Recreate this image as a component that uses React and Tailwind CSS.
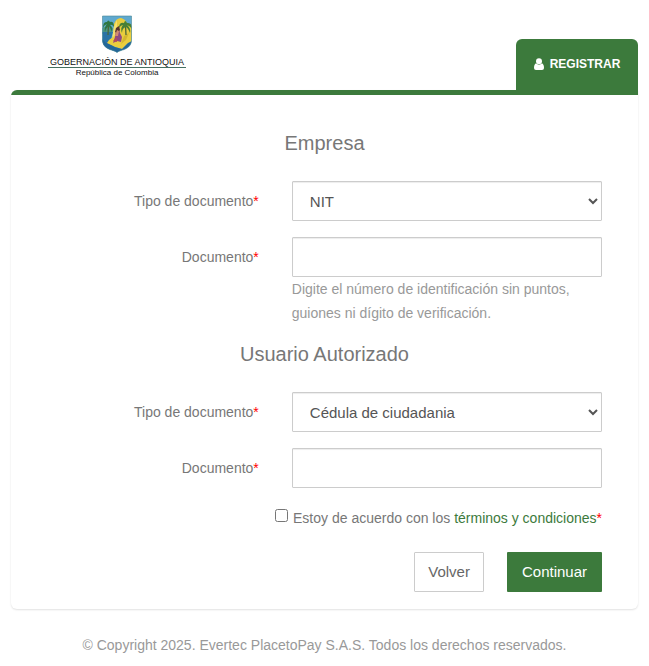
import React from "react";

function Crest() {
  return (
    <svg viewBox="0 0 30 38" className="h-[38px] w-[30px]" aria-hidden="true">
      <defs>
        <clipPath id="shield">
          <path d="M.5 1H29.500V25C29.500 31 25 34 19 35.500Q16 36.500 15 37.500Q14 36.500 11 35.500C5 34 .5 31 .5 25Z" />
        </clipPath>
      </defs>
      <g clipPath="url(#shield)">
        <rect width="30" height="38" fill="#5fa9cf" />
        <path d="M0 13L6 11L11 13L10 19L0 19Z" fill="#4b9486" />
        <path d="M0 17H11L9 24L14 38H0Z" fill="#2a73a6" />
        <path d="M12 9Q14 3 19 3Q23 4 25 8L30 11V26L25 29L20 34L13 32L5 28L7 25L11 22Z" fill="#e9cd3e" />
        <path d="M4 28L13 32L20 34L26 28L30 26V38H0V24Z" fill="#236698" />
        <path d="M15 5L12 12L10 23L13 20L15 12Z" fill="#f3df70" />
        <path d="M22 21L27 18L24 25L19 29Z" fill="#d4b62f" />
        <path d="M6.500 9L6 20M23.500 10L24 20" stroke="#4d6737" strokeWidth="1.300" fill="none" />
        <path d="M1 13Q1 6 5 7Q6 4 8 7Q12 6 12 12Q10 9 8 10Q11 12 10 17Q8 12 6.500 11Q4 13 3 17Q2 12 5 9Q2 10 1 13Z" fill="#2f7743" />
        <path d="M17 13Q17 7 22 8Q23 4 25 8Q30 7 30 14Q28 11 25 10Q29 13 28 18Q26 13 24 12Q20 13 20 18Q18 13 21 10Q19 10 17 13Z" fill="#477f36" />
        <path d="M14 15L17 13L18 18L20 22L19 27L15 26L11 28L13 22Z" fill="#8f4a82" />
        <path d="M14 13L17 11L18 15L15 18L13 17Z" fill="#55332e" />
        <path d="M15 15L17 16L16 21L13 21Z" fill="#d18b70" />
        <path d="M11 26L15 22L15 27Z" fill="#b74a58" />
      </g>
      <path d="M.5 1H29.500V25C29.500 31 25 34 19 35.500Q16 36.500 15 37.500Q14 36.500 11 35.500C5 34 .5 31 .5 25Z" fill="none" stroke="#4a8794" strokeWidth=".6" />
    </svg>
  );
}

function Logo() {
  return (
    <div className="flex flex-col items-center whitespace-nowrap text-[#111]">
      <Crest />
      <div className="mt-1 border-b border-[#456f61] px-0.5 text-[9px] leading-[10px]">
        GOBERNACIÓN DE ANTIOQUIA
      </div>
      <div className="text-[8px] leading-[10px]">República de Colombia</div>
    </div>
  );
}

const Required = () => <span className="text-[#f00]">*</span>;

const controlClass =
  "block h-10 w-full rounded-[1px] border border-[#ccc] bg-white px-[13px] text-[15px] text-[#555] shadow-[inset_0_1px_1px_rgba(0,0,0,0.075)]";

function Field({ id, label, children }) {
  return (
    <div className="grid grid-cols-[2fr_3fr] gap-[33px]">
      <label htmlFor={id} className="h-10 text-right leading-10">
        {label}
        <Required />
      </label>
      <div className="min-w-0">{children}</div>
    </div>
  );
}

function FormSection({ title, prefix, options, help }) {
  return (
    <section>
      <h2 className="mb-[26px] text-center text-[20px] leading-6">{title}</h2>
      <div className="flex flex-col gap-4 pr-9 pl-[41px]">
        <Field id={`${prefix}-type`} label="Tipo de documento">
          <select id={`${prefix}-type`} className={controlClass}>
            {options.map((option) => (
              <option key={option}>{option}</option>
            ))}
          </select>
        </Field>
        <Field id={`${prefix}-document`} label="Documento">
          <input id={`${prefix}-document`} type="text" className={controlClass} />
          {help && <p className="leading-6 text-[#999]">{help}</p>}
        </Field>
      </div>
    </section>
  );
}

export default function App() {
  return (
    <div className="px-[11px] pb-2 font-['Liberation_Sans',Arial,sans-serif] text-[14px] text-[#777]">
      <header className="flex h-[90px] items-end justify-between">
        <div className="self-start pt-[15px] pl-[37px]">
          <Logo />
        </div>
        <nav>
          <a
            href="#registrar"
            className="flex h-[51px] w-[122px] items-center justify-center gap-[6px] rounded-t-md bg-[#3c7a3c] pb-0.5 text-[12px] font-bold text-white"
          >
            <svg viewBox="0 0 10 12" className="h-3 w-2.5" fill="currentColor" aria-hidden="true">
              <circle cx="5" cy="3.200" r="3" />
              <path d="M2 5.300Q5 8.200 8 5.300Q10 6.200 10 10Q10 12 8 12H2Q0 12 0 10Q0 6.200 2 5.300Z" />
            </svg>
            REGISTRAR
          </a>
        </nav>
      </header>

      <main className="overflow-hidden rounded-tl-md rounded-b-md bg-white shadow-[0_1px_2px_rgba(0,0,0,0.12)]">
        <div className="h-[5px] bg-[#3c7a3c]" />
        <form className="pt-9 pb-[17px]" onSubmit={(event) => event.preventDefault()}>
          <div className="flex flex-col gap-[17px]">
            <FormSection
              title="Empresa"
              prefix="company"
              options={["NIT"]}
              help="Digite el número de identificación sin puntos, guiones ni dígito de verificación."
            />
            <FormSection title="Usuario Autorizado" prefix="user" options={["Cédula de ciudadania"]} />
          </div>
          <div className="mt-[18px] flex justify-end gap-[5px] pr-9 leading-6">
            <input id="terms" type="checkbox" className="mt-[3px] size-[13px]" />
            <label htmlFor="terms">
              Estoy de acuerdo con los{" "}
              <a href="#terminos" className="text-[#3c7a3c]">
                términos y condiciones
              </a>
              <Required />
            </label>
          </div>
          <div className="mt-[22px] flex justify-end gap-[23px] pr-9 text-[15px]">
            <button type="button" className="h-10 rounded-[1px] border border-[#ccc] bg-white px-[13px] text-[#666]">
              Volver
            </button>
            <button type="submit" className="h-10 rounded-[1px] bg-[#3c7a3c] px-[15px] text-white">
              Continuar
            </button>
          </div>
        </form>
      </main>

      <footer className="mt-6 text-center leading-6 text-[#999]">
        © Copyright 2025. Evertec PlacetoPay S.A.S. Todos los derechos reservados.
      </footer>
    </div>
  );
}
